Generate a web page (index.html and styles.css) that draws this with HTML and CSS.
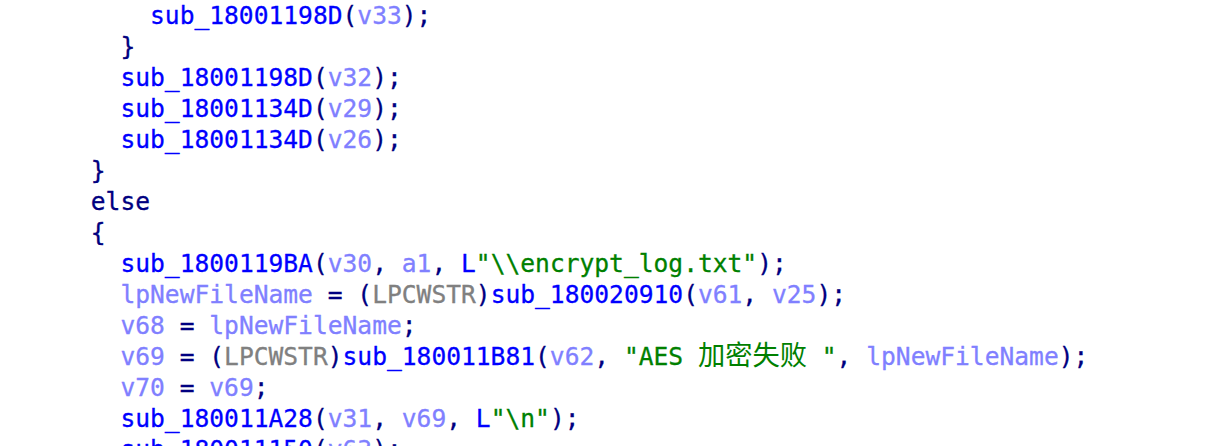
FILE: index.html
```html
<!DOCTYPE html>
<html lang="zh">
<head>
<meta charset="utf-8">
<title>Pseudocode</title>
<link rel="stylesheet" href="styles.css">
</head>
<body>
<div class="code">
<div class="ln">    <span class="fn">sub_18001198D</span><span class="p">(</span><span class="v">v33</span><span class="p">);</span></div>
<div class="ln">  <span class="p">}</span></div>
<div class="ln">  <span class="fn">sub_18001198D</span><span class="p">(</span><span class="v">v32</span><span class="p">);</span></div>
<div class="ln">  <span class="fn">sub_18001134D</span><span class="p">(</span><span class="v">v29</span><span class="p">);</span></div>
<div class="ln">  <span class="fn">sub_18001134D</span><span class="p">(</span><span class="v">v26</span><span class="p">);</span></div>
<div class="ln"><span class="p">}</span></div>
<div class="ln"><span class="p">else</span></div>
<div class="ln"><span class="p">{</span></div>
<div class="ln">  <span class="fn">sub_1800119BA</span><span class="p">(</span><span class="v">v30</span><span class="p">, </span><span class="v">a1</span><span class="p">, </span><span class="fn">L</span><span class="s">"\\encrypt_log.txt"</span><span class="p">);</span></div>
<div class="ln">  <span class="v">lpNewFileName</span><span class="p"> = (</span><span class="t">LPCWSTR</span><span class="p">)</span><span class="fn">sub_180020910</span><span class="p">(</span><span class="v">v61</span><span class="p">, </span><span class="v">v25</span><span class="p">);</span></div>
<div class="ln">  <span class="v">v68</span><span class="p"> = </span><span class="v">lpNewFileName</span><span class="p">;</span></div>
<div class="ln">  <span class="v">v69</span><span class="p"> = (</span><span class="t">LPCWSTR</span><span class="p">)</span><span class="fn">sub_180011B81</span><span class="p">(</span><span class="v">v62</span><span class="p">, </span><span class="s">"AES <span class="cjk">加密失败</span> "</span><span class="p">, </span><span class="v">lpNewFileName</span><span class="p">);</span></div>
<div class="ln">  <span class="v">v70</span><span class="p"> = </span><span class="v">v69</span><span class="p">;</span></div>
<div class="ln">  <span class="fn">sub_180011A28</span><span class="p">(</span><span class="v">v31</span><span class="p">, </span><span class="v">v69</span><span class="p">, </span><span class="fn">L</span><span class="s">"\n"</span><span class="p">);</span></div>
<div class="ln">  <span class="fn">sub_180011150</span><span class="p">(</span><span class="v">v63</span><span class="p">);</span></div>
</div>
</body>
</html>
```

FILE: styles.css
```css
html, body {
  margin: 0;
  padding: 0;
  background: #ffffff;
  height: 446px;
  overflow: hidden;
}

.code {
  padding: 0 0 0 90.8px;
  font-family: "DejaVu Sans Mono", "Noto Sans CJK SC", monospace;
  font-size: 24.6px;
  line-height: 31px;
  color: #000080;
  -webkit-text-stroke: 0.3px currentColor;
}

.ln {
  white-space: pre;
  height: 31px;
}

.fn { color: #0000ff; }
.v { color: #8080ff; }
.p { color: #000080; }
.t { color: #808080; }
.s { color: #008000; }

.cjk {
  font-family: "Noto Sans CJK SC", sans-serif;
  font-size: 27.25px;
  line-height: 0;
  -webkit-text-stroke: 0;
}
```
